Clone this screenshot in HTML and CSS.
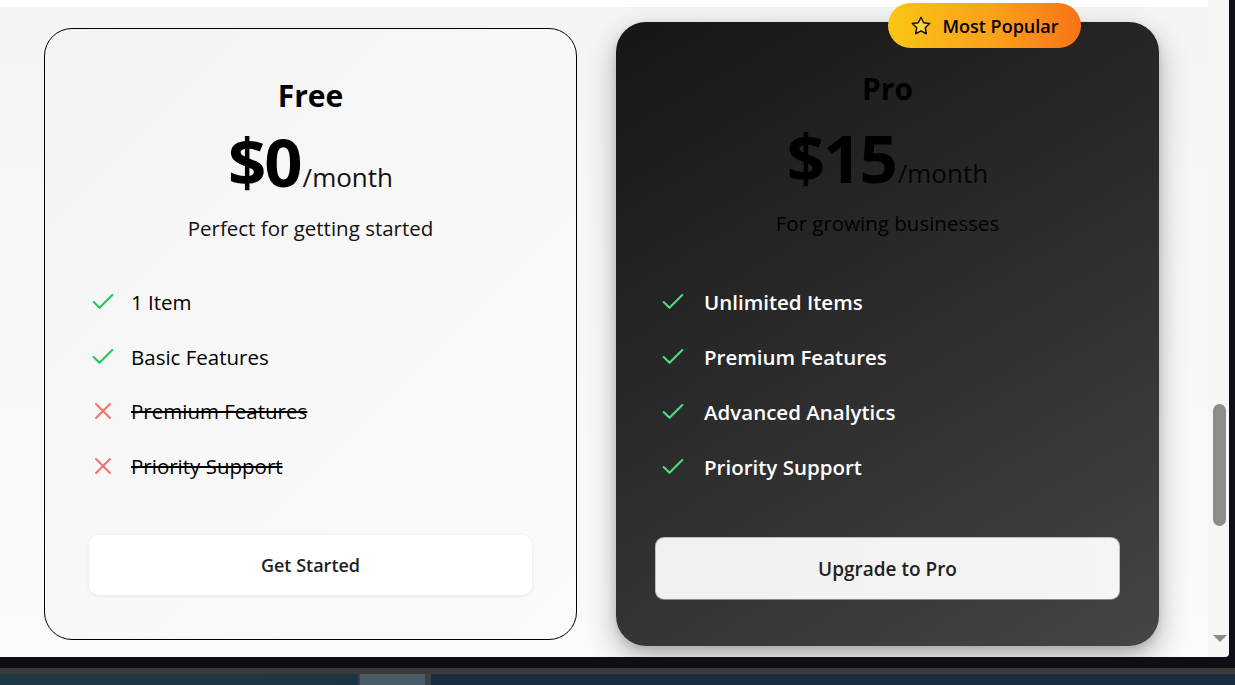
FILE: index.html
```html
<!DOCTYPE html>
<html lang="en">
<head>
<meta charset="utf-8">
<title>Pricing</title>
<link rel="stylesheet" href="styles.css">
</head>
<body>
<div class="screen">
  <div class="viewport">
    <div class="page">
      <div class="top-strip"></div>
      <div class="plans">
        <div class="card card-free">
          <h2 class="plan-name">Free</h2>
          <div class="price"><span class="amount">$0</span><span class="per">/month</span></div>
          <p class="tagline">Perfect for getting started</p>
          <ul class="features">
            <li class="feat"><svg class="ic ic-check" viewBox="0 0 24 24"><path d="M20 6 9 17l-5-5"/></svg><span>1 Item</span></li>
            <li class="feat"><svg class="ic ic-check" viewBox="0 0 24 24"><path d="M20 6 9 17l-5-5"/></svg><span>Basic Features</span></li>
            <li class="feat off"><svg class="ic ic-x" viewBox="0 0 24 24"><path d="M18 6 6 18M6 6l12 12"/></svg><span>Premium Features</span></li>
            <li class="feat off"><svg class="ic ic-x" viewBox="0 0 24 24"><path d="M18 6 6 18M6 6l12 12"/></svg><span>Priority Support</span></li>
          </ul>
          <button class="btn btn-free">Get Started</button>
        </div>
        <div class="card card-pro">
          <div class="badge"><svg class="star" viewBox="0 0 24 24"><path d="M12 2.5l2.9 5.9 6.5.95-4.7 4.6 1.1 6.5L12 17.4l-5.8 3.05 1.1-6.5-4.7-4.6 6.5-.95z"/></svg><span>Most Popular</span></div>
          <h2 class="plan-name">Pro</h2>
          <div class="price"><span class="amount">$15</span><span class="per">/month</span></div>
          <p class="tagline">For growing businesses</p>
          <ul class="features">
            <li class="feat"><svg class="ic ic-check" viewBox="0 0 24 24"><path d="M20 6 9 17l-5-5"/></svg><span>Unlimited Items</span></li>
            <li class="feat"><svg class="ic ic-check" viewBox="0 0 24 24"><path d="M20 6 9 17l-5-5"/></svg><span>Premium Features</span></li>
            <li class="feat"><svg class="ic ic-check" viewBox="0 0 24 24"><path d="M20 6 9 17l-5-5"/></svg><span>Advanced Analytics</span></li>
            <li class="feat"><svg class="ic ic-check" viewBox="0 0 24 24"><path d="M20 6 9 17l-5-5"/></svg><span>Priority Support</span></li>
          </ul>
          <button class="btn btn-pro">Upgrade to Pro</button>
        </div>
      </div>
    </div>
    <div class="scrollbar">
      <div class="thumb"></div>
      <div class="arrow"></div>
    </div>
  </div>
  <div class="frame-bottom"></div>
  <div class="taskbar-line"></div>
  <div class="taskbar">
    <div class="tb-left"></div>
    <div class="tb-sep"></div>
    <div class="tb-app"></div>
    <div class="tb-sep2"></div>
    <div class="tb-right"></div>
  </div>
</div>
</body>
</html>
```
FILE: styles.css
```css
* { box-sizing: border-box; }
html, body { margin: 0; padding: 0; }
body {
  width: 1235px;
  height: 685px;
  overflow: hidden;
  background: #0d0e16;
  font-family: "Open Sans", "Noto Sans", sans-serif;
  color: #000;
}
.screen { display: flex; flex-direction: column; width: 1235px; height: 685px; }
.viewport {
  display: flex;
  height: 657px;
  width: 1229px;
  overflow: hidden;
  border-bottom-right-radius: 4px;
}
.page {
  position: relative;
  flex: 1;
  background: linear-gradient(180deg, #f4f4f4 0%, #f8f8f8 50%, #fafafa 100%);
  overflow: hidden;
}
.top-strip { height: 7px; background: #fff; }
.plans {
  display: grid;
  grid-template-columns: 533px 543px;
  column-gap: 39px;
  align-items: start;
  padding-left: 44px;
  padding-top: 15px;
}
.card {
  position: relative;
  display: flex;
  flex-direction: column;
  align-items: stretch;
  text-align: center;
}
.card-free {
  margin-top: 6px;
  height: 612px;
  border: 1px solid #000;
  border-radius: 28px;
  background: linear-gradient(135deg, #f3f3f3 0%, #f8f8f8 50%, #fafafa 100%);
  padding: 49px 44px 44px;
}
.card-pro {
  height: 624px;
  border-radius: 30px;
  background: linear-gradient(150deg, #161616 0%, #2a2a2a 45%, #454545 100%);
  box-shadow: 0 12px 30px rgba(0,0,0,0.28), 0 4px 10px rgba(0,0,0,0.12);
  padding: 49px 39px 46px;
}
.plan-name {
  margin: 0;
  font-size: 30px;
  line-height: 34px;
  font-weight: 700;
  color: #000;
  position: relative;
  top: 1px;
}
.price {
  display: flex;
  justify-content: center;
  align-items: baseline;
  height: 64px;
  margin-top: 17px;
  line-height: 64px;
}
.card-pro .price { margin-top: 20px; }
.amount { font-size: 67px; font-weight: 700; letter-spacing: -2px; color: #000; }
.per { font-size: 26px; font-weight: 400; color: #111; margin-left: 2px; }
.card-pro .per { color: #050505; }
.tagline {
  margin: 21px 0 0;
  font-size: 20.5px;
  line-height: 28px;
  color: #111;
}
.card-pro .tagline { margin-top: 20px; color: #000; }
.features {
  list-style: none;
  margin: 46px 0 0;
  padding: 0;
  display: flex;
  flex-direction: column;
  gap: 26.5px;
  text-align: left;
}
.card-pro .features { margin-top: 51px; gap: 27px; padding-left: 4px; }
.feat {
  display: flex;
  align-items: center;
  gap: 14px;
  height: 28px;
  font-size: 20.5px;
  font-weight: 500;
  color: #000;
}
.card-pro .feat { color: #fff; font-weight: 600; font-size: 20.5px; gap: 17px; }
.feat.off span { text-decoration: line-through; text-decoration-thickness: 2px; }
.ic { width: 28px; height: 28px; flex: none; fill: none; stroke-width: 1.8; stroke-linecap: round; stroke-linejoin: round; }
.ic-check { stroke: #22c55e; }
.card-pro .ic-check { stroke: #4ade80; }
.ic-x { stroke: #f87171; }
.btn {
  margin-top: auto;
  display: flex;
  align-items: center;
  justify-content: center;
  font-family: inherit;
  font-size: 18px;
  font-weight: 600;
  color: #1f1f1f;
  cursor: pointer;
}
.btn-free {
  height: 60px;
  background: #fff;
  border: none;
  border-radius: 10px;
  box-shadow: 0 1px 4px rgba(0,0,0,0.08);
}
.btn-pro {
  height: 63px;
  background: linear-gradient(90deg, #f0f0f0, #f5f5f5);
  border: 1px solid #bdbdbd;
  border-bottom-color: #8a8a8a;
  border-radius: 9px;
  font-size: 19px;
  color: #222;
}
.badge {
  position: absolute;
  top: -19px;
  left: 272px;
  height: 45px;
  width: 193px;
  display: flex;
  align-items: center;
  justify-content: center;
  gap: 10px;
  border-radius: 23px;
  background: linear-gradient(90deg, #fac515 0%, #f9a11a 55%, #f97316 100%);
  font-size: 18px;
  font-weight: 600;
  color: #000;
  z-index: 2;
}
.star { width: 22px; height: 22px; fill: #fcd34d; stroke: #111; stroke-width: 1.6; stroke-linejoin: round; }
.scrollbar {
  position: relative;
  width: 21px;
  background: #f6f6f6;
}
.thumb {
  position: absolute;
  left: 5px;
  top: 404px;
  width: 13px;
  height: 122px;
  border-radius: 7px;
  background: #8c8c8c;
}
.arrow {
  position: absolute;
  left: 5px;
  top: 635px;
  width: 0;
  height: 0;
  border-left: 7px solid transparent;
  border-right: 7px solid transparent;
  border-top: 7px solid #8c8c8c;
}
.frame-bottom { height: 11px; background: #0d0e16; }
.taskbar-line { height: 6px; background: #3b3b3b; }
.taskbar { height: 11px; display: flex; background: #1d3140; }
.tb-left { width: 358px; background: linear-gradient(90deg, #203a44, #1f3443); }
.tb-sep { width: 2px; background: #3a4048; }
.tb-app { width: 65px; background: #4b5c67; }
.tb-sep2 { width: 6px; background: #3b4149; }
.tb-right { flex: 1; background: linear-gradient(90deg, #1b2c3f, #1c2b40); }
```
